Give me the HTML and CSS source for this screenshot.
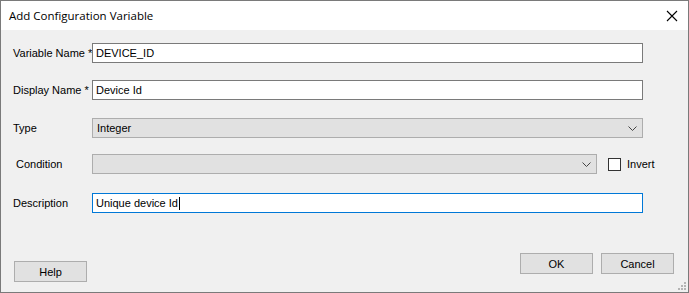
FILE: index.html
```html
<!DOCTYPE html>
<html lang="en">
<head>
  <meta charset="UTF-8" />
  <title>Add Configuration Variable</title>
  <link rel="stylesheet" href="styles.css">
</head>
<body>
  <div class="dialog">
    <div class="titlebar">
      <span class="title">Add Configuration Variable</span>
      <svg class="close" width="12" height="12" viewBox="0 0 12 12">
        <path d="M1 1L11 11M11 1L1 11" stroke="#000" stroke-width="1.1" fill="none"/>
      </svg>
    </div>

    <div class="content">
      <div class="row row-name">
        <span class="label">Variable Name *</span>
        <div class="field">DEVICE_ID</div>
      </div>
      <div class="row row-display">
        <span class="label">Display Name *</span>
        <div class="field">Device Id</div>
      </div>
      <div class="row row-type">
        <span class="label">Type</span>
        <div class="field select">
          <span>Integer</span>
          <svg class="chevron" width="9" height="5" viewBox="0 0 9 5"><path d="M0.5 0.5L4.5 4.5L8.5 0.5" stroke="#444" fill="none"/></svg>
        </div>
      </div>
      <div class="row row-condition">
        <span class="label label-indent">Condition</span>
        <div class="field select short">
          <span></span>
          <svg class="chevron" width="9" height="5" viewBox="0 0 9 5"><path d="M0.5 0.5L4.5 4.5L8.5 0.5" stroke="#444" fill="none"/></svg>
        </div>
        <span class="checkbox"></span>
        <span class="check-label">Invert</span>
      </div>
      <div class="row row-desc">
        <span class="label">Description</span>
        <div class="field focused">Unique device Id<span class="caret"></span></div>
      </div>
    </div>

    <div class="footer">
      <div class="btn help">Help</div>
      <div class="actions">
        <div class="btn">OK</div>
        <div class="btn">Cancel</div>
      </div>
    </div>
    <svg class="grip" width="8" height="8" viewBox="0 0 8 8">
      <rect x="6" y="0" width="2" height="2" fill="#b4b4b4"/>
      <rect x="3" y="3" width="2" height="2" fill="#b4b4b4"/>
      <rect x="6" y="3" width="2" height="2" fill="#b4b4b4"/>
      <rect x="0" y="6" width="2" height="2" fill="#b4b4b4"/>
      <rect x="3" y="6" width="2" height="2" fill="#b4b4b4"/>
      <rect x="6" y="6" width="2" height="2" fill="#b4b4b4"/>
    </svg>
  </div>
</body>
</html>
```

FILE: styles.css
```css
body {
  margin: 0;
  font-family: "Liberation Sans", Arial, sans-serif;
  font-size: 11px;
  color: #000;
  background: #f0f0f0;
}
.dialog {
  position: relative;
  width: 689px;
  height: 293px;
  box-sizing: border-box;
  border: 1px solid #7a7a7a;
  background: #f0f0f0;
  display: flex;
  flex-direction: column;
}
.titlebar {
  height: 29px;
  background: #fff;
  display: flex;
  align-items: center;
  justify-content: space-between;
  padding: 0 10px 0 8px;
}
.title {
  font-family: "Open Sans", sans-serif;
  font-size: 11.5px;
}
.content {
  padding: 13px 0 0 12px;
}
.row {
  display: flex;
  align-items: center;
  height: 20px;
  white-space: nowrap;
}
.row-display { margin-top: 17px; }
.row-type { margin-top: 18px; }
.row-condition { margin-top: 16px; }
.row-desc { margin-top: 19px; }
.label {
  width: 79px;
  flex: none;
}
.label-indent {
  padding-left: 3px;
  width: 76px;
}
.field {
  width: 551px;
  height: 20px;
  box-sizing: border-box;
  border: 1px solid #7a7a7a;
  background: #fff;
  padding: 0 3px;
  display: flex;
  align-items: center;
}
.field.focused {
  border-color: #0078d7;
}
.caret {
  width: 1px;
  height: 13px;
  background: #000;
  margin-left: 1px;
}
.select {
  background: #e1e1e1;
  border-color: #adadad;
  justify-content: space-between;
  padding: 0 5px 0 4px;
}
.select.short {
  width: 505px;
}
.chevron {
  display: block;
}
.checkbox {
  width: 13px;
  height: 13px;
  box-sizing: border-box;
  border: 1px solid #333;
  background: #fff;
  margin-left: 11px;
}
.check-label {
  margin-left: 6px;
}
.footer {
  flex: 1;
  display: flex;
  justify-content: space-between;
  padding: 0 14px 10px 13px;
}
.actions {
  display: flex;
  gap: 8px;
  margin-top: 40px;
}
.help {
  align-self: flex-end;
}
.btn {
  width: 73px;
  height: 21px;
  box-sizing: border-box;
  border: 1px solid #adadad;
  background: #e1e1e1;
  display: flex;
  align-items: center;
  justify-content: center;
}
.grip {
  position: absolute;
  right: 2px;
  bottom: 2px;
}
```
